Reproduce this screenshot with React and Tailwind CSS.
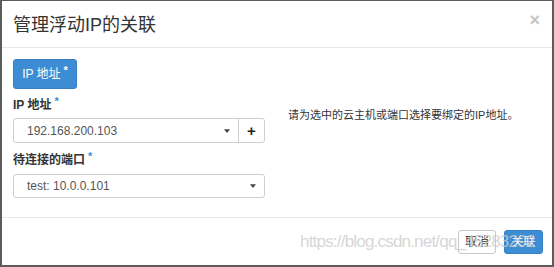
const StarMark = ({ className = "text-[#3c8dd4]" }) => (
  <span className={`ml-[3px] relative -top-[4px] text-[11px] font-bold ${className}`}>*</span>
);

const Caret = () => (
  <svg className="w-[6px] h-[4px]" viewBox="0 0 8 5">
    <path d="M0 0 L8 0 L4 5 Z" fill="#444" />
  </svg>
);

export default function App() {
  return (
    <div
      className="w-[554px] h-[267px] bg-[#5c5c5c] pl-[2px] pt-[1px] pr-[2px] pb-[2px] overflow-hidden"
      style={{ fontFamily: '"Liberation Sans", "Noto Sans CJK SC", sans-serif' }}
    >
      <div className="relative w-full h-full bg-white flex flex-col overflow-hidden">
        {/* header */}
        <div className="h-[47px] flex items-center justify-between pl-[11px] pr-[12px] border-b border-[#e8e8e8]">
          <h1 className="text-[18px] text-[#333] leading-none pt-[2px]">管理浮动IP的关联</h1>
          <span className="text-[#c4c4c4] text-[18px] font-bold leading-none -mt-[8px]">×</span>
        </div>

        {/* body */}
        <div className="flex-1 px-[11px] pt-[11px]">
          <div className="w-[64px] h-[30px] rounded-[3px] bg-[#3c8dd4] border border-[#3580c4] flex items-center justify-center text-white text-[12px]">
            IP 地址<StarMark className="text-white" />
          </div>

          <div className="flex mt-[7px]">
            <div className="w-[252px]">
              <div className="text-[12px] font-bold text-[#333] h-[18px] flex items-center">
                IP 地址<StarMark />
              </div>
              <div className="mt-[4px] h-[25px] flex border border-[#cfcfcf] rounded-[3px]">
                <div className="flex-1 flex items-center justify-between pl-[13px] pr-[8px] text-[12px] text-[#555]">
                  <span>192.168.200.103</span>
                  <Caret />
                </div>
                <div className="w-[26px] border-l border-[#cfcfcf] flex items-center justify-center text-[15px] font-bold text-[#222] leading-none">
                  +
                </div>
              </div>

              <div className="mt-[8px] text-[12px] font-bold text-[#333] h-[18px] flex items-center">
                待连接的端口<StarMark />
              </div>
              <div className="mt-[5px] h-[24px] flex items-center justify-between border border-[#cfcfcf] rounded-[3px] pl-[13px] pr-[8px] text-[12px] text-[#555]">
                <span>test: 10.0.0.101</span>
                <Caret />
              </div>
            </div>

            <div className="pl-[23px] pt-[11px] text-[11px] text-[#333]">
              请为选中的云主机或端口选择要绑定的IP地址。
            </div>
          </div>
        </div>

        {/* footer */}
        <div className="h-[48px] border-t border-[#e8e8e8] flex items-start justify-end gap-[8px] pr-[9px] pt-[12px]">
          <div className="w-[38px] h-[24px] rounded-[3px] border border-[#c8c8c8] bg-white flex items-center justify-center text-[12px] text-[#333]">
            取消
          </div>
          <div className="w-[39px] h-[24px] rounded-[3px] bg-[#3c8dd4] border border-[#3580c4] flex items-center justify-center text-[12px] text-white">
            关联
          </div>
        </div>

        {/* watermark */}
        <div className="absolute left-[298px] top-[232px] text-[17px] text-[#cccccc]/80 leading-none tracking-[-0.8px] whitespace-nowrap pointer-events-none">
          https://blog.csdn.net/qq_45283292
        </div>
      </div>
    </div>
  );
}
